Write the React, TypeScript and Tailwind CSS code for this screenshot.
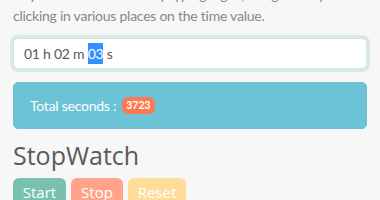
import React from "react";

export default function App() {
  return (
    <div className="h-[200px] overflow-hidden bg-[#f7f7f7] px-[13px] font-['Lato','Open_Sans',sans-serif] tracking-[-0.25px]">
      <p className="-mt-[16px] text-[14px] leading-[21px] text-[#888] whitespace-nowrap">
        Any time can be edited by typing digits, using the keys or
        <br />
        clicking in various places on the time value.
      </p>

      <div className="mt-[12px] flex h-[31px] items-center rounded-[5px] border border-[#cfe8e0] bg-white pl-[10px] text-[14px] text-[#5a5a5a] shadow-[0_0_0_3px_rgba(120,194,173,0.25)]">
        <span>01 h 02 m&nbsp;</span>
        <span className="bg-[#3390ff] text-white">03</span>
        <span>&nbsp;s</span>
      </div>

      <div className="mt-[13px] flex items-center rounded-[5px] border border-[#6cc3d5] bg-[#6cc3d5] px-[16px] py-3 text-[14px] leading-[21px] text-white">
        <span>Total seconds :</span>
        <span className="ml-[6px] rounded-[6px] bg-[#ff7851] px-[4px] text-[10.5px] font-bold leading-[17px] tracking-normal">
          3723
        </span>
      </div>

      <h2 className="mt-[11px] font-['Open_Sans',sans-serif] text-[25px] leading-[31px] tracking-normal text-[#5a5a5a]">
        StopWatch
      </h2>

      <div className="mt-[7px] flex gap-[5px] font-['Open_Sans',sans-serif] text-[15px] leading-[21px] tracking-normal text-white">
        <button className="w-[53px] rounded-[6px] bg-[#78c2ad] pt-[4px] pb-[6px] text-center">Start</button>
        <button className="w-[52px] rounded-[6px] bg-[#ffa48b] pt-[4px] pb-[6px] text-center">Stop</button>
        <button className="w-[58px] rounded-[6px] bg-[#ffdc9a] pt-[4px] pb-[6px] text-center">Reset</button>
      </div>
    </div>
  );
}
